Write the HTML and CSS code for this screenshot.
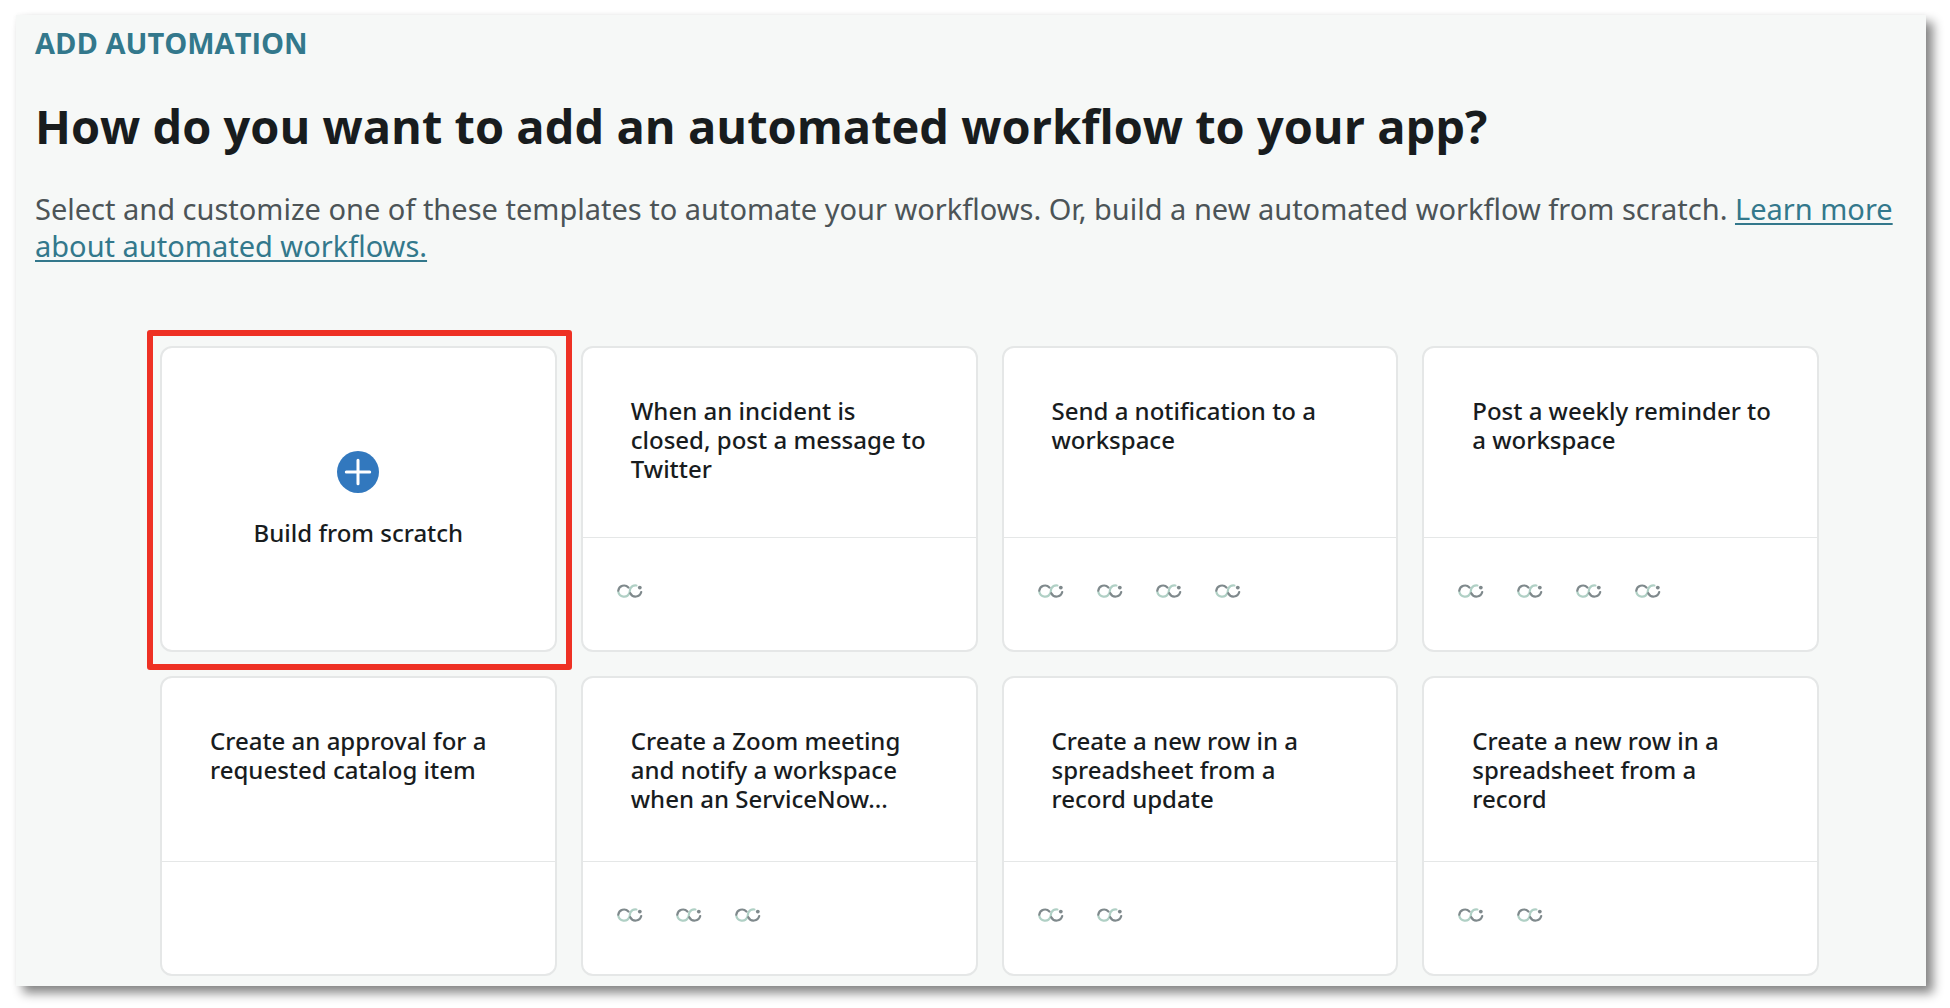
FILE: index.html
```
<!DOCTYPE html>
<html lang="en">
<head>
<meta charset="utf-8">
<meta name="viewport" content="width=device-width, initial-scale=1">
<title>Add automation</title>
<link rel="stylesheet" href="styles.css">
</head>
<body>
<svg class="sprite" aria-hidden="true">
  <symbol id="spoke" viewBox="0 0 26 14">
    <g fill="none" stroke-width="2.2" stroke-linecap="round">
      <path stroke="#b0d0c5" d="M1.3 7.6A5.8 5.8 0 0 0 12.4 9C13.2 6.8 12.6 5.8 13.6 4.2A5.8 5.8 0 0 1 19.4 1.5"/>
      <path stroke="#7f898c" d="M1.3 6.6A5.8 5.8 0 0 1 11.4 3.500"/>
      <path stroke="#7f898c" d="M13.300 9.200A5.8 5.8 0 0 0 24.2 8"/>
    </g>
    <circle cx="22.8" cy="3.6" r="1.9" fill="#7f898c"/>
  </symbol>
</svg>
<main class="panel">
  <p class="eyebrow">ADD AUTOMATION</p>
  <h1 class="title">How do you want to add an automated workflow to your app?</h1>
  <p class="intro">Select and customize one of these templates to automate your workflows. Or, build a new automated workflow from scratch. <a href="#">Learn more about automated workflows.</a></p>
  <ul class="templates">
    <li class="selected">
      <button type="button" class="card scratch">
        <svg class="plus" viewBox="0 0 42 42" aria-hidden="true"><circle cx="21" cy="21" r="21" fill="#3278be"/><path d="M21 9.300V32.700M9.300 21H32.700" stroke="#fff" stroke-width="3" stroke-linecap="round"/></svg>
        <span>Build from scratch</span>
      </button>
    </li>
    <li><button type="button" class="card"><span class="name">When an incident is closed, post a message to Twitter</span><span class="spokes"><svg><use href="#spoke"/></svg></span></button></li>
    <li><button type="button" class="card"><span class="name">Send a notification to a workspace</span><span class="spokes"><svg><use href="#spoke"/></svg><svg><use href="#spoke"/></svg><svg><use href="#spoke"/></svg><svg><use href="#spoke"/></svg></span></button></li>
    <li><button type="button" class="card"><span class="name">Post a weekly reminder to a workspace</span><span class="spokes"><svg><use href="#spoke"/></svg><svg><use href="#spoke"/></svg><svg><use href="#spoke"/></svg><svg><use href="#spoke"/></svg></span></button></li>
    <li><button type="button" class="card"><span class="name">Create an approval for a requested catalog item</span><span class="spokes"></span></button></li>
    <li><button type="button" class="card"><span class="name">Create a Zoom meeting and notify a workspace when an ServiceNow...</span><span class="spokes"><svg><use href="#spoke"/></svg><svg><use href="#spoke"/></svg><svg><use href="#spoke"/></svg></span></button></li>
    <li><button type="button" class="card"><span class="name">Create a new row in a spreadsheet from a record update</span><span class="spokes"><svg><use href="#spoke"/></svg><svg><use href="#spoke"/></svg></span></button></li>
    <li><button type="button" class="card"><span class="name">Create a new row in a spreadsheet from a record</span><span class="spokes"><svg><use href="#spoke"/></svg><svg><use href="#spoke"/></svg></span></button></li>
  </ul>
</main>
</body>
</html>
```
FILE: styles.css
```
* {
  box-sizing: border-box;
}

body {
  margin: 0;
  padding: 15px 24px 22px 16px;
  background: #fff;
  color: #181c1e;
  font-family: "Open Sans", "Noto Sans", sans-serif;
}

.sprite {
  display: none;
}

.panel {
  padding: 8px 12px 10px 19px;
  background: #f6f8f7;
  box-shadow: 7px 7px 10px rgba(0, 0, 0, 0.48), 0 0 5px rgba(0, 0, 0, 0.04);
}

.eyebrow {
  margin: 0 0 31px;
  color: #33788c;
  font-size: 29px;
  font-weight: 700;
  line-height: 40px;
}

.title {
  margin: 0 0 32px;
  font-size: 47px;
  font-weight: 700;
  line-height: 64px;
}

.intro {
  margin: 0 0 82px;
  color: #4c5457;
  font-family: "Noto Sans", "Open Sans", sans-serif;
  font-size: 29px;
  line-height: 37px;
}

.intro a {
  color: #33788c;
  text-decoration-thickness: 2px;
  text-underline-offset: 3px;
  text-decoration-skip-ink: none;
}

.templates {
  display: grid;
  grid-template-columns: repeat(4, 1fr);
  grid-template-rows: minmax(306px, auto);
  grid-auto-rows: minmax(300px, auto);
  gap: 24px;
  margin: 0 95px 0 125px;
  padding: 0;
  list-style: none;
}

.templates li {
  position: relative;
  display: flex;
}

.card {
  display: flex;
  flex: 1;
  flex-direction: column;
  align-items: stretch;
  min-width: 0;
  padding: 0;
  border: 2px solid #e5e7e7;
  border-radius: 12px;
  background: #fff;
  color: inherit;
  font-family: "Noto Sans", "Open Sans", sans-serif;
  font-size: 24px;
  font-weight: 500;
  line-height: 29px;
  text-align: left;
  cursor: pointer;
}

.scratch {
  align-items: center;
  justify-content: center;
  gap: 25px;
}

.plus {
  width: 42px;
  height: 42px;
}

.name {
  flex: 1;
  padding: 48px 42px 47px 48px;
}

.spokes {
  display: flex;
  gap: 33px;
  min-height: 113px;
  padding: 46px 34px;
  border-top: 1px solid #e5e7e7;
}

.spokes svg {
  width: 26px;
  height: 14px;
}

.selected::after {
  content: "";
  position: absolute;
  inset: -16px -15px -18px -13px;
  border: 6px solid #ee3124;
  border-radius: 3px;
  pointer-events: none;
}
```
